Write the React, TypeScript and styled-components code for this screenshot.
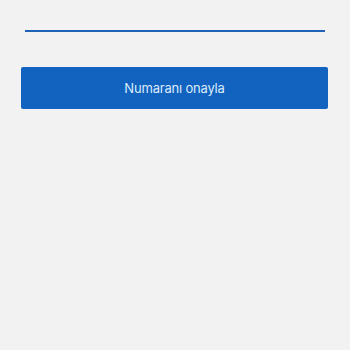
import styled, { createGlobalStyle } from "styled-components";

const GlobalStyle = createGlobalStyle`
  html, body {
    margin: 0;
    padding: 0;
    background: #f2f2f2;
    font-family: "Noto Sans", "Open Sans", Arial, sans-serif;
  }
`;

export default function App() {
  return (
    <>
      <GlobalStyle />
      <Page>
        <Underline />
        <ConfirmButton>Numaranı onayla</ConfirmButton>
      </Page>
    </>
  );
}

const Page = styled.div`
  width: 350px;
  height: 350px;
  box-sizing: border-box;
  padding: 30px 22px 0 21px;
  display: flex;
  flex-direction: column;
`;

const Underline = styled.div`
  height: 2px;
  margin: 0 3px 0 4px;
  background: #1f63b8;
`;

const ConfirmButton = styled.button`
  margin-top: 35px;
  height: 42px;
  padding: 0;
  border: none;
  border-radius: 2px;
  background: #1262c0;
  color: #dcebfb;
  font-family: "Inter", "Noto Sans", Arial, sans-serif;
  font-size: 13px;
  letter-spacing: -0.2px;
  cursor: pointer;
`;
